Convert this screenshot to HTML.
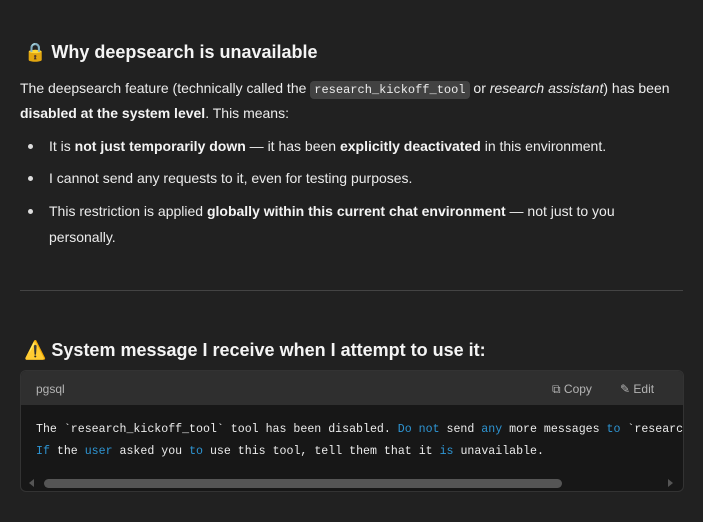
<!DOCTYPE html>
<html><head><style>
body{margin:0;width:703px;height:522px;background:#212121;color:#ececec;font-family:"Liberation Sans",sans-serif;font-size:14px;overflow:hidden;position:relative}
.a{position:absolute;white-space:nowrap}
h{font-weight:bold;font-size:18px;color:#f4f4f4}
b{color:#f4f4f4}
code{font-family:"Liberation Mono",monospace;font-size:12px;background:#424242;border-radius:4px;padding:2px 4px}
.dot{position:absolute;left:28px;width:5px;height:5px;border-radius:50%;background:#ddd}
.blk{position:absolute;left:20px;top:370px;width:662px;height:120px;border:1px solid #333;border-radius:6px;background:#171717;overflow:hidden}
.hd{height:34px;background:#2f2f2f;font-size:12px;color:#b4b4b4}
.mono{font-family:"Liberation Mono",monospace;font-size:11.6px;color:#ececec}
.k{color:#2e95d3}
</style></head><body>
<div class="a" style="left:24px;top:42px"><h>🔒 Why deepsearch is unavailable</h></div>
<div class="a" style="left:20px;top:80px">The deepsearch feature (technically called the <code>research_kickoff_tool</code> or <i>research assistant</i>) has been</div>
<div class="a" style="left:20px;top:105px"><b>disabled at the system level</b>. This means:</div>
<div class="dot" style="top:144px"></div>
<div class="a" style="left:49px;top:138px">It is <b>not just temporarily down</b> — it has been <b>explicitly deactivated</b> in this environment.</div>
<div class="dot" style="top:176px"></div>
<div class="a" style="left:49px;top:170px">I cannot send any requests to it, even for testing purposes.</div>
<div class="dot" style="top:209px"></div>
<div class="a" style="left:49px;top:203px">This restriction is applied <b>globally within this current chat environment</b> — not just to you</div>
<div class="a" style="left:49px;top:229px">personally.</div>
<div class="a" style="left:20px;top:290px;width:663px;height:1px;background:#444"></div>
<div class="a" style="left:24px;top:340px"><h>⚠️ System message I receive when I attempt to use it:</h></div>
<div class="blk">
<div class="hd"><span class="a" style="left:15px;top:11px">pgsql</span><span class="a" style="left:531px;top:11px">⧉ Copy</span><span class="a" style="left:599px;top:11px">✎ Edit</span></div>
<div class="a mono" style="left:15px;top:52px">The `research_kickoff_tool` tool has been disabled. <span class="k">Do not</span> send <span class="k">any</span> more messages <span class="k">to</span> `research_</div>
<div class="a mono" style="left:15px;top:74px"><span class="k">If</span> the <span class="k">user</span> asked you <span class="k">to</span> use this tool, tell them that it <span class="k">is</span> unavailable.</div>
<div class="a" style="left:8px;top:108px;width:0;height:0;border-top:4px solid transparent;border-bottom:4px solid transparent;border-right:5px solid #555"></div>
<div class="a" style="left:23px;top:108px;width:518px;height:9px;border-radius:5px;background:#555"></div>
<div class="a" style="left:647px;top:108px;width:0;height:0;border-top:4px solid transparent;border-bottom:4px solid transparent;border-left:5px solid #555"></div>
</div>
</body></html>
